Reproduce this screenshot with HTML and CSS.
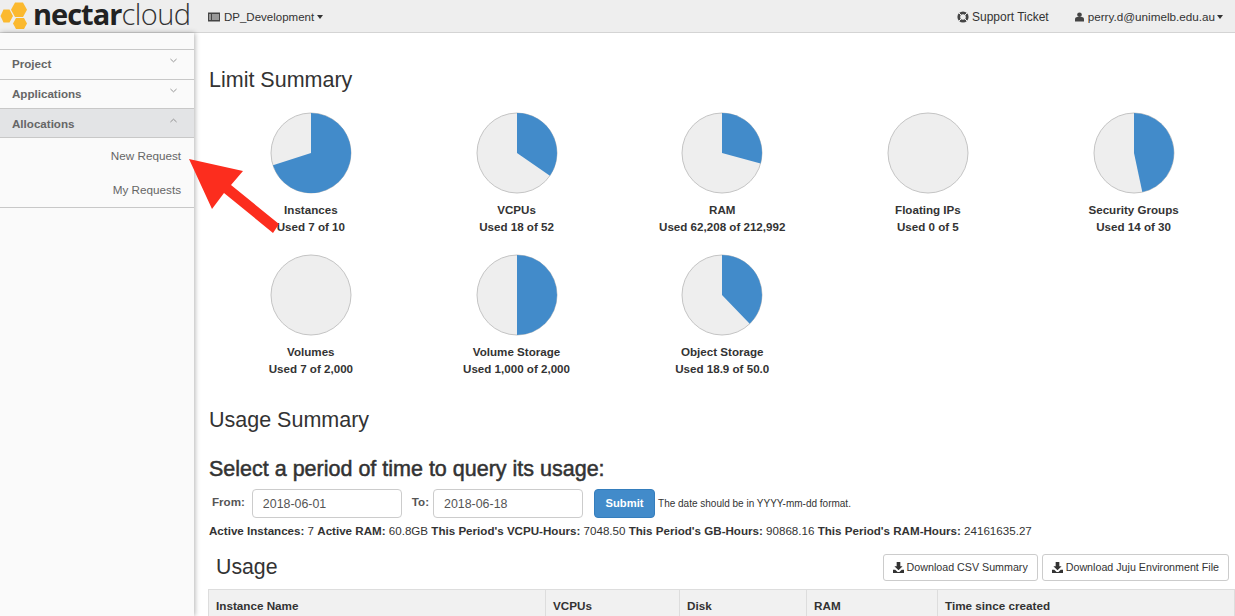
FILE: index.html
```html
<!DOCTYPE html>
<html lang="en">
<head>
    <meta charset="UTF-8">
    <title>Limit Summary</title>
    <link rel="stylesheet" href="styles.css">
</head>
<body>
    <header class="topbar">
        <div class="brand">
            <svg class="brand-mark" viewBox="0 0 30 30" width="30" height="30">
                <polygon fill="#fbb92f" points="15,1.500 23,1.500 27,8.700 23,16 15,16 11,8.700"/>
                <polygon fill="#fbb92f" points="3.500,8.500 9.500,8.500 13,15 9.500,21.500 3.500,21.500 .5,15"/>
                <polygon fill="#fbb92f" points="16,17 24,17 27,22.500 24,28 16,28 13,22.500"/>
            </svg>
            <span class="brand-name"><b>nectar</b><span class="brand-light">cloud</span></span>
        </div>
        <a class="nav-item project-menu">
            <svg class="icon" viewBox="0 0 12 12" width="12" height="12"><path fill="#444" d="M0 1.5h12v9H0z"/><path fill="#eee" d="M1 3.500h2v1H1zM4 3.500h7v1H4zM1 5.500h2v1H1zM4 5.500h7v1H4zM1 7.500h2v1H1zM4 7.500h7v1H4z"/></svg>
            DP_Development <i class="caret"></i>
        </a>
        <div class="nav-right">
            <a class="nav-item support-link">
                <svg class="icon" viewBox="0 0 12 12" width="12" height="12"><circle cx="6" cy="6" r="4.200" fill="none" stroke="#444" stroke-width="2.800"/><path stroke="#eee" stroke-width="1" d="M1.600 1.600l2.400 2.400M10.400 1.600L8 4M1.600 10.400L4 8M10.400 10.400L8 8"/></svg>
                Support Ticket
            </a>
            <a class="nav-item user-menu">
                <svg class="icon" viewBox="0 0 10 12" width="9" height="12"><circle cx="5" cy="3.500" r="2.600" fill="#444"/><path fill="#444" d="M0 11V8.500C0 7 1.200 6 2.500 6h5C8.800 6 10 7 10 8.500V11z"/></svg>
                perry.d@unimelb.edu.au <i class="caret"></i>
            </a>
        </div>
    </header>

    <div class="page">
        <aside class="sidebar">
            <div class="side-group">
                <span>Project</span>
                <svg class="chev" viewBox="0 0 8 5" width="7" height="5"><path d="M.5.8L4 4 7.5.8" fill="none" stroke="#888"/></svg>
            </div>
            <div class="side-group">
                <span>Applications</span>
                <svg class="chev" viewBox="0 0 8 5" width="7" height="5"><path d="M.5.8L4 4 7.5.8" fill="none" stroke="#888"/></svg>
            </div>
            <div class="side-group open">
                <span>Allocations</span>
                <svg class="chev" viewBox="0 0 8 5" width="7" height="5"><path d="M.5 4.200L4 1l3.500 3.200" fill="none" stroke="#888"/></svg>
            </div>
            <ul class="side-links">
                <li>New Request</li>
                <li>My Requests</li>
            </ul>
        </aside>

        <main class="content">
            <h2 class="page-title">Limit Summary</h2>
            <div class="pies">
                <div class="pie">
                    <svg viewBox="-41 -41 82 82" width="82" height="82"><circle r="40" class="pie-bg"/><path class="pie-fill" d="M0 0V-40A40 40 0 1 1 -38.04 12.36Z"/></svg>
                    <strong>Instances</strong><strong>Used 7 of 10</strong>
                </div>
                <div class="pie">
                    <svg viewBox="-41 -41 82 82" width="82" height="82"><circle r="40" class="pie-bg"/><path class="pie-fill" d="M0 0V-40A40 40 0 0 1 32.9 22.7Z"/></svg>
                    <strong>VCPUs</strong><strong>Used 18 of 52</strong>
                </div>
                <div class="pie">
                    <svg viewBox="-41 -41 82 82" width="82" height="82"><circle r="40" class="pie-bg"/><path class="pie-fill" d="M0 0V-40A40 40 0 0 1 38.6 10.4Z"/></svg>
                    <strong>RAM</strong><strong>Used 62,208 of 212,992</strong>
                </div>
                <div class="pie">
                    <svg viewBox="-41 -41 82 82" width="82" height="82"><circle r="40" class="pie-bg"/></svg>
                    <strong>Floating IPs</strong><strong>Used 0 of 5</strong>
                </div>
                <div class="pie">
                    <svg viewBox="-41 -41 82 82" width="82" height="82"><circle r="40" class="pie-bg"/><path class="pie-fill" d="M0 0V-40A40 40 0 0 1 8.3 39.1Z"/></svg>
                    <strong>Security Groups</strong><strong>Used 14 of 30</strong>
                </div>
                <div class="pie">
                    <svg viewBox="-41 -41 82 82" width="82" height="82"><circle r="40" class="pie-bg"/></svg>
                    <strong>Volumes</strong><strong>Used 7 of 2,000</strong>
                </div>
                <div class="pie">
                    <svg viewBox="-41 -41 82 82" width="82" height="82"><circle r="40" class="pie-bg"/><path class="pie-fill" d="M0 0V-40A40 40 0 0 1 0 40Z"/></svg>
                    <strong>Volume Storage</strong><strong>Used 1,000 of 2,000</strong>
                </div>
                <div class="pie">
                    <svg viewBox="-41 -41 82 82" width="82" height="82"><circle r="40" class="pie-bg"/><path class="pie-fill" d="M0 0V-40A40 40 0 0 1 27.7 28.8Z"/></svg>
                    <strong>Object Storage</strong><strong>Used 18.9 of 50.0</strong>
                </div>
            </div>

            <h2 class="section-title">Usage Summary</h2>
            <h3 class="query-title">Select a period of time to query its usage:</h3>
            <form class="date-form">
                <label for="from">From:</label>
                <input id="from" type="text" value="2018-06-01">
                <label for="to" class="to-label">To:</label>
                <input id="to" type="text" value="2018-06-18">
                <button type="button" class="btn-submit">Submit</button>
                <small>The date should be in YYYY-mm-dd format.</small>
            </form>
            <p class="totals">
                <b>Active Instances:</b> 7 <b>Active RAM:</b> 60.8GB <b>This Period's VCPU-Hours:</b> 7048.50 <b>This Period's GB-Hours:</b> 90868.16 <b>This Period's RAM-Hours:</b> 24161635.27
            </p>
            <div class="usage-head">
                <h3>Usage</h3>
                <div class="usage-actions">
                    <button type="button" class="btn-plain">
                        <svg viewBox="0 0 12 12" width="11" height="11"><path fill="#333" d="M4 0h4v4.500h2.500L6 9 1.500 4.500H4zM0 8.500h2.500L5 11h2l2.500-2.500H12V12H0z"/></svg>
                        Download CSV Summary
                    </button>
                    <button type="button" class="btn-plain">
                        <svg viewBox="0 0 12 12" width="11" height="11"><path fill="#333" d="M4 0h4v4.500h2.500L6 9 1.500 4.500H4zM0 8.500h2.500L5 11h2l2.500-2.500H12V12H0z"/></svg>
                        Download Juju Environment File
                    </button>
                </div>
            </div>
            <table class="usage-table">
                <thead>
                    <tr>
                        <th class="col-name">Instance Name</th>
                        <th class="col-vcpu">VCPUs</th>
                        <th class="col-disk">Disk</th>
                        <th class="col-ram">RAM</th>
                        <th>Time since created</th>
                    </tr>
                </thead>
            </table>
        </main>
    </div>

    <!-- annotation drawn over the page -->
    <svg class="arrow" viewBox="0 0 100 80" width="100" height="80">
        <polygon fill="#fc2d1e" points="2,2 56,14 44,28 92,67 86,76 37,36 25,52"/>
    </svg>
</body>
</html>
```

FILE: styles.css
```css
* {
    box-sizing: border-box;
}

body {
    margin: 0;
    height: 616px;
    overflow: hidden;
    position: relative;
    background: #fff;
    color: #333;
    font-family: "Liberation Sans", Arial, sans-serif;
    font-size: 11.6px;
}

.topbar {
    display: flex;
    align-items: center;
    height: 33px;
    padding-top: 1px;
    background: #eeeeee;
    border-bottom: 1px solid #d4d4d4;
}

.brand {
    display: flex;
    align-items: center;
    width: 208px;
    height: 32px;
    margin-top: -1px;
}

.brand-mark {
    flex: none;
}

.brand-name {
    margin: -5px 0 0 3px;
    font-size: 29px;
    font-weight: 300;
    font-family: "Open Sans", sans-serif;
    color: #333;
    line-height: 30px;
}

.brand-name b {
    font-weight: 700;
    color: #222;
    letter-spacing: -1px;
}

.brand-light {
    letter-spacing: -0.5px;
}

.nav-item {
    display: flex;
    align-items: center;
    gap: 4px;
    color: #333;
    font-size: 11.5px;
}

.nav-right {
    display: flex;
    margin-left: auto;
    padding-right: 12px;
}

.support-link {
    gap: 3px;
    font-size: 12px;
}

.user-menu {
    margin-left: 26px;
    font-size: 11.7px;
}

.icon {
    flex: none;
}

.caret {
    width: 0;
    height: 0;
    margin-left: -1px;
    border-top: 4px solid #333;
    border-left: 3.5px solid transparent;
    border-right: 3.5px solid transparent;
}

.user-menu .caret {
    margin-left: -2px;
}

.page {
    display: flex;
    height: 583px;
}

.sidebar {
    flex: none;
    width: 194px;
    padding-top: 16px;
    background: #fafafa;
    box-shadow: 1px 0 5px rgba(0, 0, 0, .3);
}

.side-group {
    display: flex;
    justify-content: space-between;
    height: 29px;
    padding: 7px 17px 0 12px;
    border-top: 1px solid #c8c8c8;
    font-weight: bold;
    color: #666;
}

.side-group:first-child {
    height: 30px;
}

.side-group .chev {
    margin-top: 1px;
}

.side-group.open {
    padding-top: 8px;
    background: #e3e4e6;
}

.side-links {
    list-style: none;
    margin: 0;
    padding: 11px 13px 0 0;
    height: 71px;
    border-top: 1px solid #c8c8c8;
    border-bottom: 1px solid #c8c8c8;
    text-align: right;
    font-size: 11.7px;
    color: #666;
}

.side-links li {
    height: 34px;
}

.content {
    flex: 1;
    min-width: 0;
    padding-left: 15px;
}

.page-title {
    margin: 34px 0 19px;
    font-size: 21.5px;
    font-weight: normal;
    line-height: 26px;
}

.pies {
    display: grid;
    grid-template-columns: repeat(5, 205.7px);
    row-gap: 19px;
    margin-left: -1px;
}

.pie {
    display: flex;
    flex-direction: column;
    align-items: center;
    line-height: 17px;
}

.pie svg {
    margin-bottom: 7px;
}

.pie-bg {
    fill: #eeeeee;
    stroke: #c4c4c4;
    stroke-width: 1;
}

.pie-fill {
    fill: #428bca;
}

.section-title {
    margin: 30px 0 0;
    font-size: 21.5px;
    font-weight: normal;
    line-height: 26px;
}

.query-title {
    margin: 23px 0 0;
    font-size: 21.5px;
    font-weight: normal;
    line-height: 26px;
    -webkit-text-stroke: 0.5px #333;
}

.date-form {
    display: flex;
    align-items: center;
    height: 30px;
    margin-top: 6px;
    padding-left: 3px;
}

.date-form label {
    margin-right: 7px;
    margin-top: -4px;
    font-weight: bold;
    color: #555;
}

.date-form .to-label {
    margin-left: 10px;
    margin-right: 4px;
}

.date-form input {
    width: 150px;
    height: 29px;
    padding: 2px 10px 0;
    border: 1px solid #ccc;
    border-radius: 4px;
    color: #555;
    font: 12.4px "Liberation Sans", Arial, sans-serif;
}

.btn-submit {
    width: 61px;
    height: 29px;
    margin-left: 11px;
    border: 1px solid #357ebd;
    border-radius: 4px;
    background: #428bca;
    color: #fff;
    font: bold 11.2px "Liberation Sans", Arial, sans-serif;
}

.date-form small {
    margin-left: 3px;
    font-size: 10px;
}

.totals {
    margin: 4px 0 0;
    white-space: nowrap;
    line-height: 17px;
}

.usage-head {
    display: flex;
    justify-content: space-between;
    align-items: center;
    margin-top: 6px;
    height: 44px;
    padding-right: 6px;
}

.usage-head h3 {
    margin: 0 0 0 7px;
    font-size: 21.3px;
    font-weight: normal;
}

.usage-actions {
    display: flex;
    gap: 4px;
}

.btn-plain {
    display: flex;
    align-items: center;
    gap: 3px;
    height: 27px;
    padding: 0 9px;
    border: 1px solid #ccc;
    border-radius: 3px;
    background: #fff;
    color: #333;
    font: 10.7px "Liberation Sans", Arial, sans-serif;
}

.usage-table {
    width: calc(100% + 1px);
    margin-left: -1px;
    border-collapse: collapse;
    table-layout: fixed;
}

.usage-table th {
    height: 34px;
    padding: 0 7px 2px;
    background: #f1f1f1;
    border: 1px solid #ddd;
    border-bottom: 0;
    text-align: left;
    font-size: 11.7px;
}

.col-name {
    width: 337px;
}

.col-vcpu {
    width: 134px;
}

.col-disk {
    width: 127px;
}

.col-ram {
    width: 131px;
}

.arrow {
    position: absolute;
    left: 187px;
    top: 157px;
}
```
